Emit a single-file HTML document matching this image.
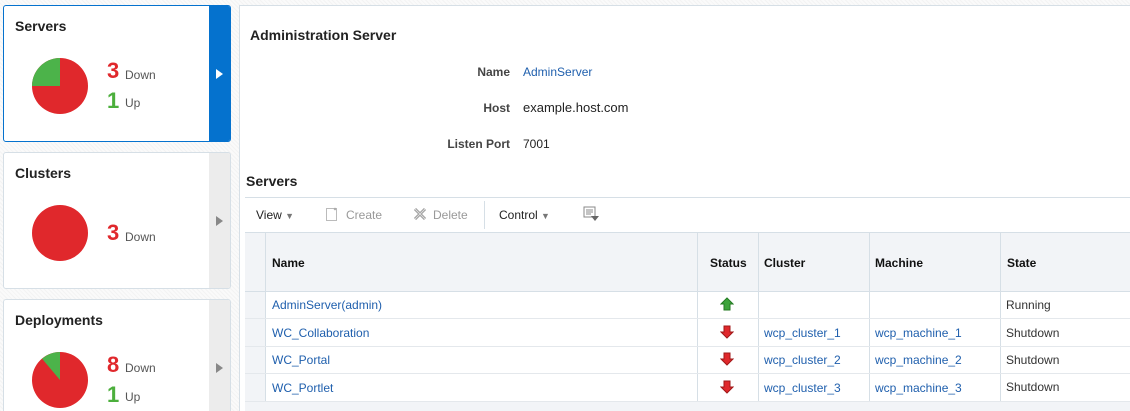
<!DOCTYPE html>
<html style="width:1130px;height:411px;overflow:hidden"><head><style>
*{margin:0;padding:0;box-sizing:border-box}
body{width:1130px;height:411px;overflow:hidden;position:relative;font-family:"Liberation Sans",Arial,sans-serif;background:repeating-linear-gradient(45deg,#f3f3f3 0 1px,#fafafa 1px 3px)}
.a{position:absolute}
.card{position:absolute;left:3px;width:228px;background:#fff;border:1px solid #d6dfe6;border-radius:3px;overflow:hidden}
.card h3{position:absolute;left:11px;top:12px;font-size:14px;font-weight:bold;color:#222}
.strip{position:absolute;right:0;top:0;bottom:0;width:21px;background:#ececec}
.tri{position:absolute;left:7px;width:0;height:0;border-top:5px solid transparent;border-bottom:5px solid transparent;border-left:7px solid #888}
.big{position:absolute;font-size:22px;font-weight:bold}
.lbl{position:absolute;font-size:12px;color:#555}
.red{color:#e0282c}.grn{color:#4caf3c}
.panel{position:absolute;left:239px;top:5px;width:900px;height:420px;background:#fff;border:1px solid #d6dfe6}
.t{position:absolute;font-size:12px;color:#333}
.lnk{color:#1f5fad}
.hd{font-weight:bold;color:#111;font-size:12px}
</style></head><body>

<div class="card" style="top:5px;height:137px;border-color:#0572ce">
<h3>Servers</h3>
<svg class="a" style="left:27px;top:51px" width="58" height="58" viewBox="-29 -29 58 58"><circle r="28" fill="#e0282c"/><path d="M0 0 L-28 0 A28 28 0 0 1 0 -28Z" fill="#4cb34a"/></svg>
<div class="big red" style="left:103px;top:52px">3</div><div class="lbl" style="left:121px;top:62px">Down</div>
<div class="big grn" style="left:103px;top:82px">1</div><div class="lbl" style="left:121px;top:90px">Up</div>
<div class="strip" style="background:#0572ce"><div class="tri" style="top:63px;border-left-color:#fff"></div></div>
</div>

<div class="card" style="top:152px;height:137px">
<h3>Clusters</h3>
<svg class="a" style="left:27px;top:51px" width="58" height="58" viewBox="-29 -29 58 58"><circle r="28" fill="#e0282c"/></svg>
<div class="big red" style="left:103px;top:67px">3</div><div class="lbl" style="left:121px;top:77px">Down</div>
<div class="strip"><div class="tri" style="top:63px"></div></div>
</div>

<div class="card" style="top:299px;height:130px">
<h3>Deployments</h3>
<svg class="a" style="left:27px;top:51px" width="58" height="58" viewBox="-29 -29 58 58"><circle r="28" fill="#e0282c"/><path d="M0 0 L-18 -21.4 A28 28 0 0 1 0 -28Z" fill="#4cb34a"/></svg>
<div class="big red" style="left:103px;top:52px">8</div><div class="lbl" style="left:121px;top:61px">Down</div>
<div class="big grn" style="left:103px;top:82px">1</div><div class="lbl" style="left:121px;top:90px">Up</div>
<div class="strip"><div class="tri" style="top:63px"></div></div>
</div>

<div class="panel"></div>
<div class="t hd" style="left:250px;top:27px;font-size:14px;color:#222">Administration Server</div>
<div class="t" style="left:300px;width:210px;text-align:right;top:65px;font-weight:bold;color:#444">Name</div>
<div class="t lnk" style="left:523px;top:65px">AdminServer</div>
<div class="t" style="left:300px;width:210px;text-align:right;top:101px;font-weight:bold;color:#444">Host</div>
<div class="t" style="left:523px;top:100px;font-size:13px;color:#222">example.host.com</div>
<div class="t" style="left:300px;width:210px;text-align:right;top:137px;font-weight:bold;color:#444">Listen Port</div>
<div class="t" style="left:523px;top:137px;color:#222">7001</div>
<div class="t hd" style="left:246px;top:173px;font-size:14px;color:#222">Servers</div>
<div class="a" style="left:245px;top:197px;width:885px;height:1px;background:#d6dfe6"></div>

<div class="t" style="left:256px;top:208px;color:#222">View <span style="color:#777;font-size:9px">▼</span></div>
<svg class="a" style="left:325px;top:207px" width="14" height="14"><rect x="1.5" y="1.5" width="10" height="12" fill="#fff" stroke="#bbb"/><path d="M9 1 l2 2 M11 1 l-2 2" stroke="#aaa"/></svg>
<div class="t" style="left:346px;top:208px;color:#999">Create</div>
<svg class="a" style="left:413px;top:207px" width="14" height="14"><path d="M2 2 L12 12 M12 2 L2 12" stroke="#999" stroke-width="3"/><path d="M2 2 L12 12 M12 2 L2 12" stroke="#ddd" stroke-width="1"/></svg>
<div class="t" style="left:433px;top:208px;color:#999">Delete</div>
<div class="a" style="left:484px;top:201px;width:1px;height:28px;background:#d6dfe6"></div>
<div class="t" style="left:499px;top:208px;color:#222">Control <span style="color:#777;font-size:9px">▼</span></div>
<svg class="a" style="left:583px;top:206px" width="16" height="16"><rect x="1" y="1" width="11" height="10" fill="#fff" stroke="#888"/><path d="M3 4h7M3 6h7M3 8h5" stroke="#888"/><path d="M8 10h8l-4 5z" fill="#666"/></svg>

<div class="a" style="left:245px;top:232px;width:890px;height:180px;background:#f2f4f7;border-top:1px solid #d6dfe6"></div>
<div class="a" style="left:265px;top:291px;width:870px;height:110px;background:#fff"></div>
<div class="a" style="left:265px;top:232px;width:1px;height:169px;background:#d6dfe6"></div>
<div class="a" style="left:697px;top:232px;width:1px;height:169px;background:#d6dfe6"></div>
<div class="a" style="left:758px;top:232px;width:1px;height:169px;background:#d6dfe6"></div>
<div class="a" style="left:869px;top:232px;width:1px;height:169px;background:#d6dfe6"></div>
<div class="a" style="left:1000px;top:232px;width:1px;height:169px;background:#d6dfe6"></div>
<div class="a" style="left:245px;top:291px;width:890px;height:1px;background:#d6dfe6"></div>
<div class="a" style="left:245px;top:318px;width:890px;height:1px;background:#e4e8ec"></div>
<div class="a" style="left:245px;top:346px;width:890px;height:1px;background:#e4e8ec"></div>
<div class="a" style="left:245px;top:373px;width:890px;height:1px;background:#e4e8ec"></div>
<div class="a" style="left:245px;top:401px;width:890px;height:1px;background:#e4e8ec"></div>

<div class="t hd" style="left:272px;top:256px">Name</div>
<div class="t hd" style="left:710px;top:256px">Status</div>
<div class="t hd" style="left:764px;top:256px">Cluster</div>
<div class="t hd" style="left:875px;top:256px">Machine</div>
<div class="t hd" style="left:1007px;top:256px">State</div>

<div class="t lnk" style="left:272px;top:298px">AdminServer(admin)</div>
<div class="t lnk" style="left:272px;top:326px">WC_Collaboration</div>
<div class="t lnk" style="left:272px;top:353px">WC_Portal</div>
<div class="t lnk" style="left:272px;top:381px">WC_Portlet</div>

<svg class="a" style="left:720px;top:297px" width="14" height="14"><path d="M7 1 L13 7 H10 V13 H4 V7 H1 Z" fill="#3ca43a" stroke="#237a22"/></svg>
<svg class="a" style="left:720px;top:325px" width="14" height="14"><path d="M7 13 L13 7 H10 V1 H4 V7 H1 Z" fill="#e0282c" stroke="#a01818"/></svg>
<svg class="a" style="left:720px;top:352px" width="14" height="14"><path d="M7 13 L13 7 H10 V1 H4 V7 H1 Z" fill="#e0282c" stroke="#a01818"/></svg>
<svg class="a" style="left:720px;top:380px" width="14" height="14"><path d="M7 13 L13 7 H10 V1 H4 V7 H1 Z" fill="#e0282c" stroke="#a01818"/></svg>

<div class="t lnk" style="left:764px;top:326px">wcp_cluster_1</div>
<div class="t lnk" style="left:764px;top:353px">wcp_cluster_2</div>
<div class="t lnk" style="left:764px;top:381px">wcp_cluster_3</div>
<div class="t lnk" style="left:875px;top:326px">wcp_machine_1</div>
<div class="t lnk" style="left:875px;top:353px">wcp_machine_2</div>
<div class="t lnk" style="left:875px;top:381px">wcp_machine_3</div>
<div class="t" style="left:1006px;top:298px">Running</div>
<div class="t" style="left:1006px;top:326px">Shutdown</div>
<div class="t" style="left:1006px;top:353px">Shutdown</div>
<div class="t" style="left:1006px;top:380px">Shutdown</div>
</body></html>
